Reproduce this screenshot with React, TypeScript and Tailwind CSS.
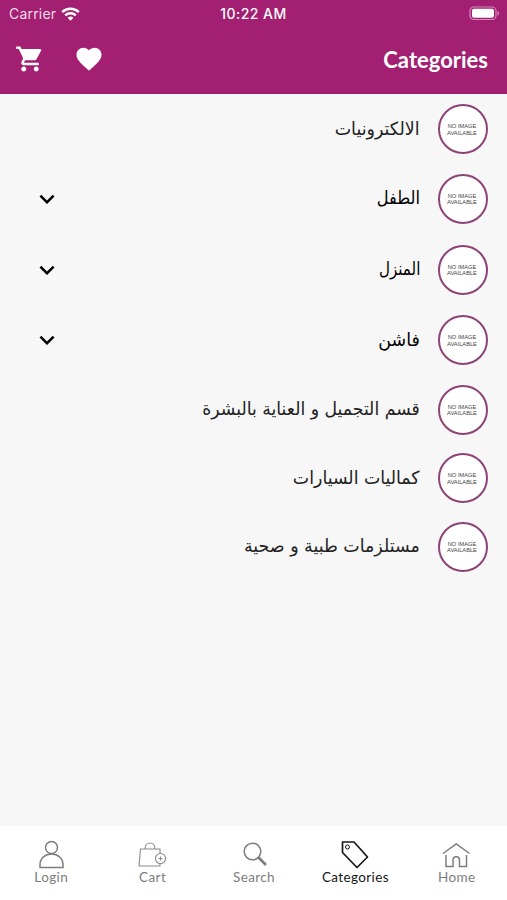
import type { ReactNode } from 'react';
import clsx from 'clsx';
import { MdFavorite, MdKeyboardArrowDown, MdShoppingCart } from 'react-icons/md';

type Category = {
  name: string;
  expandable?: boolean;
  className: string;
};

const categories: Category[] = [
  { name: 'الالكترونيات', className: 'scale-x-[0.97]' },
  { name: 'الطفل', expandable: true, className: 'scale-x-[0.9]' },
  { name: 'المنزل', expandable: true, className: 'scale-x-[0.84]' },
  { name: 'فاشن', expandable: true, className: 'scale-x-[0.97]' },
  { name: 'قسم التجميل و العناية بالبشرة', className: 'scale-x-[0.959]' },
  { name: 'كماليات السيارات', className: 'scale-x-[0.963]' },
  { name: 'مستلزمات طبية و صحية', className: 'scale-x-[0.967]' },
];

function StatusBar() {
  return (
    <div className="grid h-[27px] grid-cols-3 items-center px-[7px] font-['Inter',sans-serif] text-white">
      <div className="flex items-center gap-[5px] pl-[2px] text-[#f3dcea]">
        <span className="text-[14px] tracking-[0.2px]">Carrier</span>
        <svg width="19" height="14" viewBox="0 0 19 14" fill="none" stroke="white" strokeWidth="2.5">
          <path d="M1.200 5.100C5.800.6 13.200.6 17.800 5.100" />
          <path d="M4.200 8.300c3-2.800 7.600-2.800 10.600 0" />
          <path d="M6.600 10.700c1.600-1.500 4.200-1.500 5.800 0L9.500 13.700z" fill="white" stroke="none" />
        </svg>
      </div>
      <div className="text-center text-[14px] font-medium tracking-[0.45px] whitespace-nowrap">10:22 AM</div>
      <svg className="justify-self-end" width="31" height="15" viewBox="0 0 31 15">
        <rect x="1" y="1" width="26" height="12.5" rx="3.8" fill="none" stroke="#d08ab7" strokeWidth="1.2" />
        <rect x="3" y="2.800" width="22" height="9" rx="2" fill="white" />
        <path d="M28.500 5v4.600c2-.8 2-3.800 0-4.600z" fill="#d08ab7" />
      </svg>
    </div>
  );
}

function Thumbnail() {
  return (
    <div className="flex size-[50px] shrink-0 items-center justify-center rounded-full border-2 border-[#8d4375] bg-white pr-[2px] pt-[1px] text-center font-['Liberation_Sans',sans-serif] text-[5.7px] leading-[6.5px] text-[#444]">
      <span>
        NO IMAGE
        <br />
        AVAILABLE
      </span>
    </div>
  );
}

function CategoryRow({ name, expandable, className }: Category) {
  return (
    <li className={clsx('flex items-center pr-[19px] pl-8', expandable ? 'h-[70.7px]' : 'h-[68.5px]')}>
      {expandable && <MdKeyboardArrowDown size={30} className="text-black" />}
      <span
        dir="rtl"
        className={clsx(
          "mr-[18px] mb-[2px] ml-auto origin-right font-['DejaVu_Sans',sans-serif] text-[18px] whitespace-nowrap",
          expandable ? 'text-black' : 'text-[#222]',
          className,
        )}
      >
        {name}
      </span>
      <Thumbnail />
    </li>
  );
}

function Tab({ label, active, children }: { label: string; active?: boolean; children: ReactNode }) {
  return (
    <button className={clsx('flex flex-1 flex-col items-center', active ? 'text-[#161616]' : 'text-[#7d7d7d]')}>
      <svg width="30" height="30" viewBox="0 0 30 30" fill="none" stroke="currentColor" strokeWidth="1.5">
        {children}
      </svg>
      <span className="-mt-px ml-px text-[13.5px] leading-[16px] tracking-[0.38px]">{label}</span>
    </button>
  );
}

export default function App() {
  return (
    <div className="flex h-[900px] w-[507px] flex-col overflow-hidden bg-[#f7f7f7] font-['Lato',sans-serif]">
      <header className="h-[94px] bg-[#a31f71]">
        <StatusBar />
        <div className="flex h-[64px] items-center pr-[19px] pl-[15px] text-white">
          <MdShoppingCart size={30} />
          <MdFavorite size={30} className="ml-[29px]" />
          <h1 className="ml-auto text-[22px] font-bold">Categories</h1>
        </div>
      </header>

      <ul className="flex-1 pt-[1px]">
        {categories.map((category) => (
          <CategoryRow key={category.name} {...category} />
        ))}
      </ul>

      <nav className="flex h-[74px] bg-white pt-[14px]">
        <Tab label="Login">
          <circle cx="15.500" cy="7.500" r="6" />
          <path d="M4 27.500v-3c0-6 5-10.500 11.500-10.500s11.500 4.500 11.500 10.500v3z" />
        </Tab>
        <Tab label="Cart">
          <g strokeWidth="1.100" stroke="#8a8a8a">
            <path d="M23 14V9H3.500L2 26h21v-3" />
            <path d="M8 9c0-8 10-8 10 0" />
            <circle cx="23.500" cy="18.500" r="5" />
            <path d="M23.500 16.500v4M21.500 18.500h4" />
          </g>
        </Tab>
        <Tab label="Search">
          <circle cx="13.500" cy="11.500" r="8.300" />
          <path d="M19.500 17.500l7.500 7.500" strokeWidth="2.600" />
        </Tab>
        <Tab label="Categories" active>
          <path d="M2.500 2h11.500l13.500 15L17 27.500 2.500 12.500z" strokeWidth="1.700" strokeLinejoin="round" />
          <circle cx="7.500" cy="7" r="2" strokeWidth="1" />
        </Tab>
        <Tab label="Home">
          <path d="M2 13.500L15.200 4 28.500 13.500" />
          <path d="M5 15v11.500h7v-6.500c0-4.500 6.500-4.500 6.500 0v6.500H25.500V15" />
        </Tab>
      </nav>
    </div>
  );
}
